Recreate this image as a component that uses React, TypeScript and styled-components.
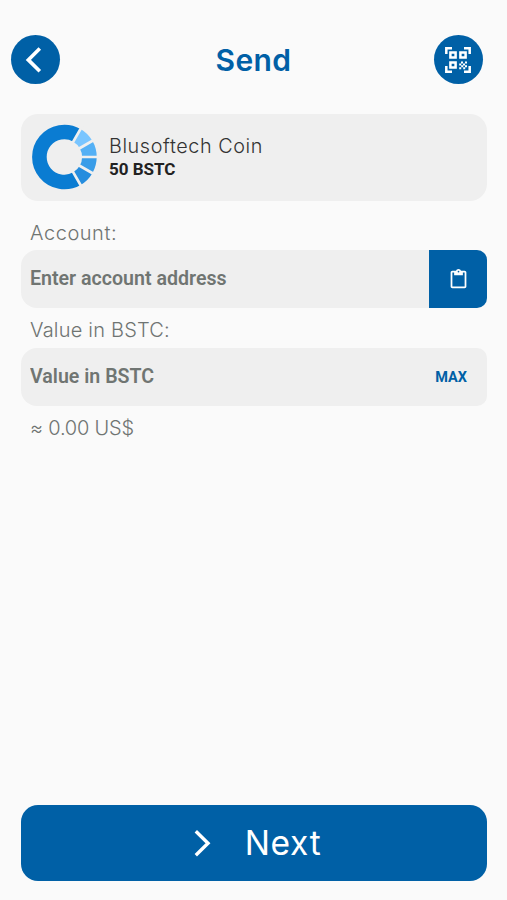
import React from "react";
import styled, { createGlobalStyle } from "styled-components";

const BLUE = "#0060a6";
const SANS = `Inter, "Liberation Sans", sans-serif`;
const ROBOTO = `Roboto, "Liberation Sans", sans-serif`;

const GlobalStyle = createGlobalStyle`
  *, *::before, *::after { box-sizing: border-box; }
  html, body, #root { height: 100%; }
  body { margin: 0; background: #fafafa; overflow: hidden; }
  button, input { font: inherit; border: 0; margin: 0; padding: 0; background: none; outline: none; }
  svg { display: block; flex: none; }
`;

const Screen = styled.main`
  display: flex;
  flex-direction: column;
  width: 507px;
  height: 900px;
  padding: 35px 0 19px;
  background: #fafafa;
`;

const Header = styled.header`
  display: flex;
  align-items: center;
  justify-content: space-between;
  height: 49px;
  padding: 0 24.5px 0 10.5px;
`;

const RoundButton = styled.button`
  display: flex;
  align-items: center;
  justify-content: center;
  width: 49px;
  height: 49px;
  border-radius: 50%;
  background: ${BLUE};
`;

const Title = styled.h1`
  margin: 0 0 0 14px;
  font: 600 30px/48px ${SANS};
  letter-spacing: 0.4px;
  color: ${BLUE};
`;

const Content = styled.section`
  display: flex;
  flex-direction: column;
  padding: 29.5px 20px 0 21px;
`;

const CoinCard = styled.div`
  display: flex;
  align-items: center;
  gap: 12px;
  height: 87.5px;
  padding-left: 10px;
  border-radius: 17px;
  background: #efefef;
`;

const CoinText = styled.div`
  display: flex;
  flex-direction: column;
  padding-top: 1px;
`;

const CoinName = styled.span`
  font: 300 19.8px/24px ${SANS};
  letter-spacing: 0.58px;
  color: #333;
`;

const Balance = styled.span`
  font: 700 17px/23px ${ROBOTO};
  color: #222;
`;

const Label = styled.label<{ $top: number; $height: number; $spacing: number }>`
  height: ${(p) => p.$height}px;
  padding: ${(p) => p.$top}px 0 0 9px;
  font: 300 20px/26px ${SANS};
  letter-spacing: ${(p) => p.$spacing}px;
  white-space: nowrap;
  color: #6f7472;
`;

const Field = styled.div`
  display: flex;
  height: 58px;
  border-radius: 16px 10px 10px 16px;
  background: #efefef;
  overflow: hidden;
`;

const Input = styled.input`
  flex: 1;
  min-width: 0;
  height: 57px;
  padding-left: 9px;
  font: 600 19.6px/24px ${ROBOTO};
  color: #707572;
  &::placeholder { color: #707572; opacity: 1; }
`;

const PasteButton = styled.button`
  display: flex;
  align-items: center;
  justify-content: center;
  width: 58px;
  background: ${BLUE};
`;

const MaxButton = styled.button`
  padding: 1px 20px 0 0;
  font: 700 14.5px/20px ${ROBOTO};
  color: ${BLUE};
`;

const NextButton = styled.button`
  display: flex;
  align-items: center;
  justify-content: center;
  gap: 34px;
  height: 76.5px;
  margin: auto 20px 0 21px;
  padding-left: 7px;
  border-radius: 17px;
  background: ${BLUE};
  font: 400 33.5px/44px ${SANS};
  letter-spacing: 0.7px;
  color: #fff;
`;

const BackIcon = () => (
  <svg width="49" height="49" viewBox="0 0 49 49" fill="none" stroke="#fff" strokeWidth="3.6">
    <path d="M28.8 13.4 17.3 24.9l11.5 11.4" />
  </svg>
);

const ScanIcon = () => (
  <svg width="26" height="26" viewBox="0 0 26 26" fill="none" stroke="#fff" strokeWidth="2.5">
    <path d="M1.3 7V1.3H7M19 1.3h5.7V7M1.3 19v5.7H7M19 24.7h5.7V19" />
    <path d="M5.4 5.4h5.2v5.2H5.4zM15.4 5.4h5.2v5.2h-5.2zM5.4 15.4h5.2v5.2H5.4z" />
    <path
      stroke="none"
      fill="#fff"
      d="M16 14.4h2v2h-2zM20 14.4h2v2h-2zM14.2 16.4h2v2h-2zM18 16.4h2v2h-2zM16.2 18.2h2v2h-2zM20 18.2h2v2h-2zM14.2 20.2h2v2h-2zM18.2 20.2h2v2h-2z"
    />
  </svg>
);

const CoinIcon = () => {
  const arc = (from: number, to: number) => {
    const at = (deg: number) => {
      const a = (deg * Math.PI) / 180;
      return `${(33.4 + 25 * Math.cos(a)).toFixed(2)} ${(33 + 25 * Math.sin(a)).toFixed(2)}`;
    };
    return `M${at(from)}A25 25 0 ${to - from > 180 ? 1 : 0} 1 ${at(to)}`;
  };
  return (
    <svg width="66" height="66" viewBox="0 0 66 66" fill="none" strokeWidth="14.6">
      <path d={arc(60, 300)} stroke="#0a7cd2" />
      <path d={arc(-60, -30)} stroke="#79c5ff" />
      <path d={arc(-30, 0)} stroke="#54b0f5" />
      <path d={arc(0, 30)} stroke="#389ce8" />
      <path d={arc(30, 60)} stroke="#268dde" />
      <path
        d="M41.4 19.1 51.4 1.8M47.3 25 64.6 15M49 33h17M47.3 41l17.3 10M41.4 46.9l10 17.3"
        stroke="#efefef"
        strokeWidth="2.7"
      />
    </svg>
  );
};

const PasteIcon = () => (
  <svg width="21" height="21" viewBox="0 0 24 24" fill="#fff">
    <path d="M19 2h-4.18C14.4.84 13.3 0 12 0S9.6.84 9.18 2H5c-1.1 0-2 .9-2 2v16c0 1.1.9 2 2 2h14c1.1 0 2-.9 2-2V4c0-1.1-.9-2-2-2zm-7 0c.55 0 1 .45 1 1s-.45 1-1 1-1-.45-1-1 .45-1 1-1zm7 18H5V4h2v3h10V4h2v16z" />
  </svg>
);

const ForwardIcon = () => (
  <svg width="17" height="28" viewBox="0 0 17 28" fill="none" stroke="#fff" strokeWidth="3.4">
    <path d="M1.8 2.3 14 14.3 1.8 26.2" />
  </svg>
);

export default function App() {
  return (
    <>
      <GlobalStyle />
      <Screen>
        <Header>
          <RoundButton aria-label="Back"><BackIcon /></RoundButton>
          <Title>Send</Title>
          <RoundButton aria-label="Scan code"><ScanIcon /></RoundButton>
        </Header>
        <Content>
          <CoinCard>
            <CoinIcon />
            <CoinText>
              <CoinName>Blusoftech Coin</CoinName>
              <Balance>50 BSTC</Balance>
            </CoinText>
          </CoinCard>
          <Label htmlFor="account" $top={19} $height={49} $spacing={0.55}>Account:</Label>
          <Field>
            <Input id="account" placeholder="Enter account address" />
            <PasteButton aria-label="Paste"><PasteIcon /></PasteButton>
          </Field>
          <Label htmlFor="value" $top={9} $height={40} $spacing={0.2}>Value in BSTC:</Label>
          <Field>
            <Input id="value" placeholder="Value in BSTC" />
            <MaxButton>MAX</MaxButton>
          </Field>
          <Label as="div" $top={9} $height={40} $spacing={-0.2}>≈ 0.00 US$</Label>
        </Content>
        <NextButton>
          <ForwardIcon />
          Next
        </NextButton>
      </Screen>
    </>
  );
}
